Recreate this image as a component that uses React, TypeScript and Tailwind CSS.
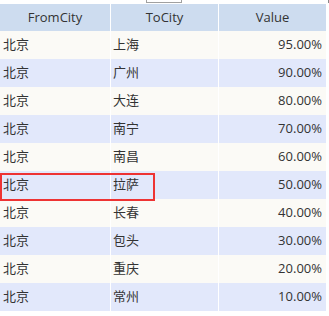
import React from 'react';

type Row = { from: string; to: string; value: string };

const rows: Row[] = [
    { from: '北京', to: '上海', value: '95.00%' },
    { from: '北京', to: '广州', value: '90.00%' },
    { from: '北京', to: '大连', value: '80.00%' },
    { from: '北京', to: '南宁', value: '70.00%' },
    { from: '北京', to: '南昌', value: '60.00%' },
    { from: '北京', to: '拉萨', value: '50.00%' },
    { from: '北京', to: '长春', value: '40.00%' },
    { from: '北京', to: '包头', value: '30.00%' },
    { from: '北京', to: '重庆', value: '20.00%' },
    { from: '北京', to: '常州', value: '10.00%' },
];

const font = { fontFamily: '"Open Sans", "Noto Sans CJK SC", sans-serif' };

const App: React.FC = () => {
    return (
        <div className="relative w-[329px] h-[316px] bg-white overflow-hidden text-[13px] text-[#333]" style={font}>
            {/* half-hidden box poking in from above */}
            <div className="absolute left-[146px] top-[-10px] w-[36px] h-[13px] border border-[#a0a0a0] bg-white" />
            <div className="absolute left-[328px] top-0 w-[1px] h-[3px] bg-[#888]" />

            <div className="pt-[4px] w-[326px]">
                <div className="flex h-[27px] bg-[#cddcef]">
                    <div className="w-[111px] border-r border-white flex items-center justify-center">FromCity</div>
                    <div className="w-[108px] border-r border-white flex items-center justify-center">ToCity</div>
                    <div className="w-[107px] flex items-center justify-center">Value</div>
                </div>
                {rows.map((row, i) => (
                    <div key={row.to} className={`flex h-[28px] ${i % 2 === 0 ? 'bg-[#fbfaf6]' : 'bg-[#e2e8fb]'}`}>
                        <div className="w-[111px] border-r border-white flex items-center pl-[3px]">{row.from}</div>
                        <div className="w-[108px] border-r border-white flex items-center pl-[2px]">{row.to}</div>
                        <div className="w-[107px] flex items-center justify-end pr-[4px]">{row.value}</div>
                    </div>
                ))}
            </div>

            {/* selection outline */}
            <div className="absolute left-0 top-[173px] w-[155px] h-[28px] border-2 border-[#ee3333]" />
        </div>
    );
};

export default App;
